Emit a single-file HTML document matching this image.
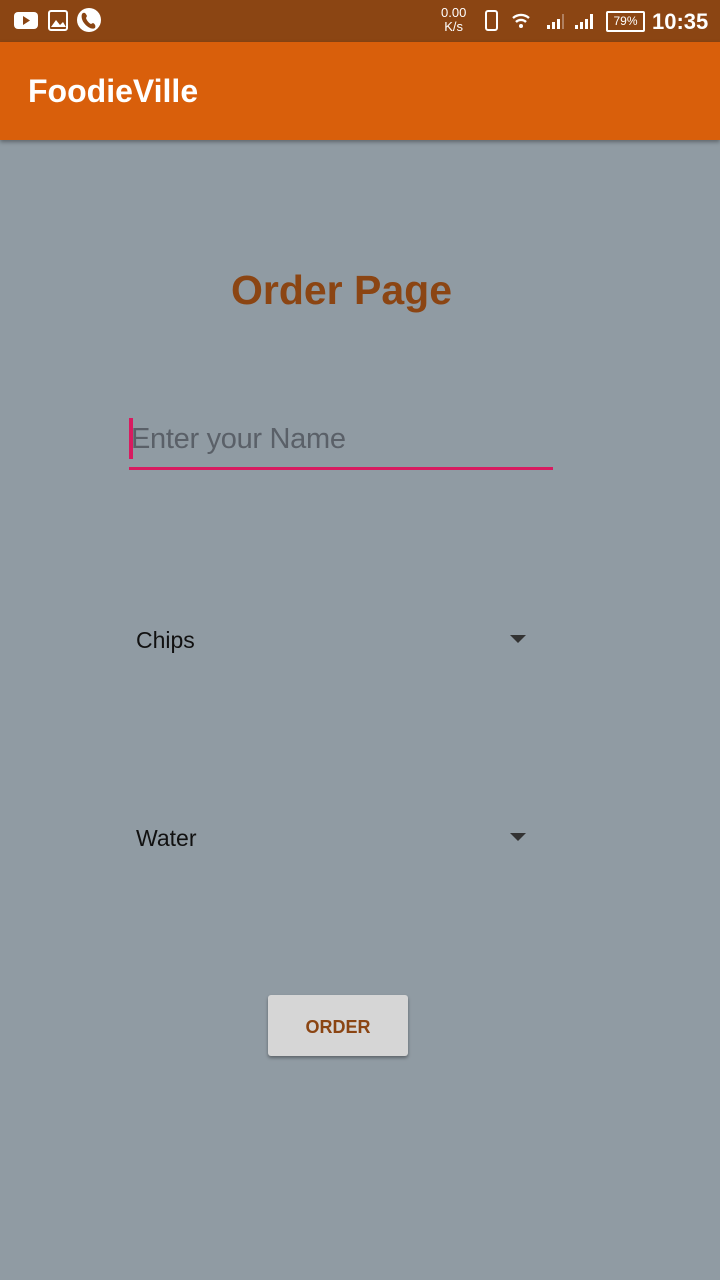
<!DOCTYPE html>
<html><head><style>
body{margin:0;width:720px;height:1280px;background:#909ba3;font-family:"Liberation Sans",sans-serif;position:relative;overflow:hidden}
.sb{position:absolute;top:0;left:0;width:720px;height:42px;background:#8b4513;color:#fff}
.ab{position:absolute;top:42px;left:0;width:720px;height:98px;background:#d95f0b;box-shadow:0 2px 4px rgba(0,0,0,.35)}
.ab span{position:absolute;left:28px;top:31px;font-size:32px;font-weight:bold;color:#fff}
.t{position:absolute;left:0;width:683px;text-align:center;top:267px;font-size:41px;font-weight:bold;color:#8b4513}
.cur{position:absolute;left:129px;top:418px;width:4px;height:41px;background:#d81b60}
.ph{position:absolute;left:131px;top:423px;font-size:29px;color:#5a6068;letter-spacing:-0.3px}
.ul{position:absolute;left:129px;top:467px;width:424px;height:3px;background:#d81b60}
.dd{position:absolute;left:136px;font-size:23px;color:#111}
.ar{position:absolute;left:510px;width:0;height:0;border-left:8px solid transparent;border-right:8px solid transparent;border-top:8px solid #333}
.btn{position:absolute;left:268px;top:995px;width:140px;height:61px;background:#d6d6d6;border-radius:3px;box-shadow:0 2px 3px rgba(0,0,0,.35);color:#8b4513;font-size:18px;font-weight:bold;text-align:center;line-height:64px}
</style></head><body>
<div class="sb">
<svg width="110" height="42" style="position:absolute;left:12px;top:0">
<rect x="2" y="12" width="24" height="17" rx="4" fill="#fff"/><path d="M11 16l7 4.5-7 4.5z" fill="#8b4513"/>
<rect x="37" y="11" width="18" height="19" rx="2" fill="none" stroke="#fff" stroke-width="2"/><path d="M39 27l5-7 4 5 3-3 3 5z" fill="#fff"/>
<circle cx="77" cy="20" r="12" fill="#fff"/><path d="M71 13c2-1 3 1 4 3l-1 2c1 3 3 5 5 6l2-1c2 1 3 3 2 5-3 2-8-1-11-5s-3-9-1-10z" fill="#8b4513"/>
</svg>
<div style="position:absolute;left:441px;top:6px;font-size:13px;line-height:14px;text-align:center">0.00<br>K/s</div>
<svg width="150" height="42" style="position:absolute;left:480px;top:0">
<rect x="6" y="11" width="11" height="19" rx="2" fill="none" stroke="#fff" stroke-width="2"/>
<path d="M33 18a12 12 0 0 1 16 0M36 22a7 7 0 0 1 10 0" stroke="#fff" stroke-width="2.4" fill="none"/><circle cx="41" cy="26" r="2" fill="#fff"/>
<path d="M67 29v-4h3v4zM72 29v-7h3v7zM77 29v-10h3v10z" fill="#fff"/><rect x="82" y="14" width="2" height="15" fill="#b08060"/>
<path d="M95 29v-4h3v4zM100 29v-7h3v7zM105 29v-10h3v10zM110 29v-15h3v15z" fill="#fff"/>
</svg>
<div style="position:absolute;left:606px;top:11px;width:35px;height:17px;border:2px solid #fff;border-radius:2px;font-size:12px;text-align:center;line-height:17px">79%</div>
<div style="position:absolute;left:652px;top:9px;font-size:22px;font-weight:bold">10:35</div>
</div>
<div class="ab"><span>FoodieVille</span></div>
<div class="t">Order Page</div>
<div class="cur"></div><div class="ph">Enter your Name</div><div class="ul"></div>
<div class="dd" style="top:627px">Chips</div><div class="ar" style="top:635px"></div>
<div class="dd" style="top:825px">Water</div><div class="ar" style="top:833px"></div>
<div class="btn">ORDER</div>
</body></html>
